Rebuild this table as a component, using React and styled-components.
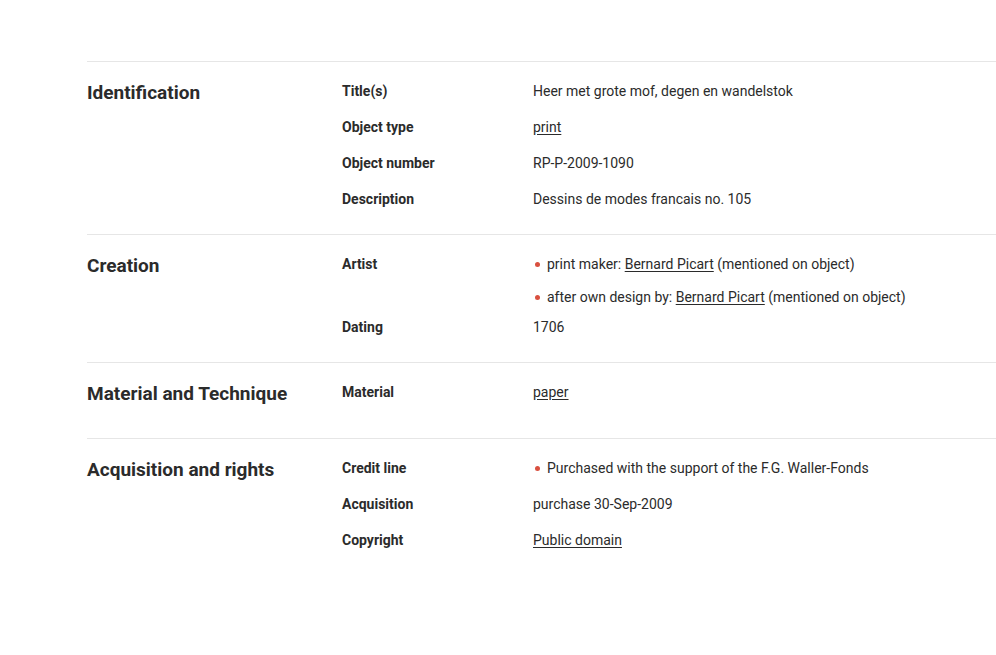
import React from "react";
import styled, { createGlobalStyle } from "styled-components";

const Global = createGlobalStyle`
  html, body { margin: 0; padding: 0; background: #fff; overflow: hidden; }
  body { font-family: Roboto, "Liberation Sans", sans-serif; color: #2b2b2b; }
`;

const Page = styled.div`
  padding: 61px 0 0 87px;
  width: 100%;
  box-sizing: border-box;
  overflow: hidden;
`;

const Section = styled.section`
  display: grid;
  grid-template-columns: 255px 1fr;
  border-top: 1px solid #e6e6e6;
  padding: 16px 0 23px;
  width: 1000px;
`;

const Heading = styled.h2`
  margin: 0 0 6px;
  font-size: 19px;
  line-height: 30px;
  font-weight: 700;
  color: #2b2b2b;
`;

const Rows = styled.dl`
  display: grid;
  grid-template-columns: 191px 1fr;
  margin: 0;
  row-gap: 12px;
  align-content: start;
  padding-top: 1px;
`;

const Label = styled.dt`
  font-size: 14px;
  line-height: 24px;
  font-weight: 700;
`;

const Value = styled.dd`
  margin: 0;
  font-size: 14px;
  line-height: 24px;
  font-weight: 400;
`;

const Link = styled.a`
  color: #2b2b2b;
  text-decoration: underline;
  text-underline-offset: 2px;
`;

const List = styled.ul`
  list-style: none;
  margin: 0 0 ${(p) => (p.$multi ? "-6px" : "0")};
  padding: 0;
  display: flex;
  flex-direction: column;
  gap: 9px;
`;

const Item = styled.li`
  display: flex;
  align-items: center;
  gap: 7px;
  &::before {
    content: "";
    width: 5px;
    height: 5px;
    margin-left: 2px;
    border-radius: 50%;
    background: #d9503f;
    flex: none;
  }
`;

const sections = [
  {
    title: "Identification",
    rows: [
      ["Title(s)", "Heer met grote mof, degen en wandelstok"],
      ["Object type", <Link href="#">print</Link>],
      ["Object number", "RP-P-2009-1090"],
      ["Description", "Dessins de modes francais no. 105"],
    ],
  },
  {
    title: "Creation",
    rows: [
      [
        "Artist",
        <List $multi>
          <Item>
            <span>
              print maker: <Link href="#">Bernard Picart</Link> (mentioned on object)
            </span>
          </Item>
          <Item>
            <span>
              after own design by: <Link href="#">Bernard Picart</Link> (mentioned on object)
            </span>
          </Item>
        </List>,
      ],
      ["Dating", "1706"],
    ],
  },
  {
    title: "Material and Technique",
    rows: [["Material", <Link href="#">paper</Link>]],
  },
  {
    title: "Acquisition and rights",
    rows: [
      [
        "Credit line",
        <List>
          <Item>
            <span>Purchased with the support of the F.G. Waller-Fonds</span>
          </Item>
        </List>,
      ],
      ["Acquisition", "purchase 30-Sep-2009"],
      ["Copyright", <Link href="#">Public domain</Link>],
    ],
  },
];

export default function App() {
  return (
    <>
      <Global />
      <Page>
        {sections.map((s) => (
          <Section key={s.title}>
            <Heading>{s.title}</Heading>
            <Rows>
              {s.rows.map(([l, v]) => (
                <React.Fragment key={l}>
                  <Label>{l}</Label>
                  <Value>{v}</Value>
                </React.Fragment>
              ))}
            </Rows>
          </Section>
        ))}
      </Page>
    </>
  );
}
